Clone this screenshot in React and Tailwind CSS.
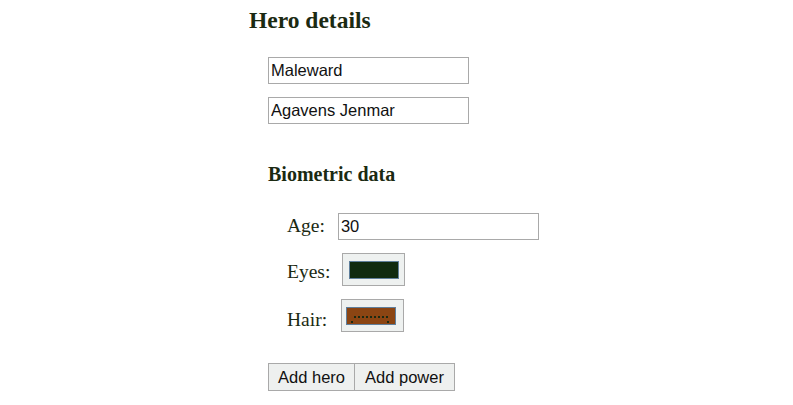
import React from 'react';

const serif = "font-['Liberation_Serif',_'Times_New_Roman',_serif]";
const sans = "font-['Liberation_Sans',_Arial,_sans-serif]";

const ColorSwatch = ({ color, focused, offset }) => (
  <div className={`w-[63px] h-[33px] border border-[#a9a9a9] bg-[#eef1f0] flex items-center ${offset}`}>
    <div className="relative w-[50px] h-[18px] border border-[#5f7f9c]" style={{ backgroundColor: color }}>
      {focused && (
        <>
          <span className="absolute left-[7px] top-[8px] w-[34px] border-t-2 border-dotted border-[#1b2a12]"></span>
          <span className="absolute left-[4px] bottom-[1px] w-[2px] h-[2px] bg-[#1b2a12]"></span>
          <span className="absolute right-[6px] bottom-[1px] w-[2px] h-[2px] bg-[#1b2a12]"></span>
        </>
      )}
    </div>
  </div>
);

export default function App() {
  return (
    <div className={`w-[793px] h-[405px] bg-white pl-[249px] text-[#1b2a12] ${serif}`}>
      {/* Heading */}
      <h2 className="pt-[6px] text-[23.5px] leading-[28px] font-bold">Hero details</h2>

      <div className="pl-[19px]">
        <div className="mt-[23px] flex flex-col gap-[13px]">
          <input
            readOnly
            value="Maleward"
            className={`w-[201px] h-[27px] border border-[#a9a9a9] px-[2px] text-[16.5px] text-[#111] outline-none ${sans}`}
          />
          <input
            readOnly
            value="Agavens Jenmar"
            className={`w-[201px] h-[27px] border border-[#a9a9a9] px-[2px] text-[16.5px] text-[#111] outline-none ${sans}`}
          />
        </div>

        <h3 className="mt-[38px] text-[20px] leading-[24px] font-bold">Biometric data</h3>

        {/* Biometric rows */}
        <div className="mt-[27px] pl-[19px] flex flex-col gap-[13px] text-[19.5px] leading-[24px]">
          <div className="flex items-baseline gap-[13px]">
            <span>Age:</span>
            <input
              readOnly
              value="30"
              className={`w-[201px] h-[27px] border border-[#a9a9a9] px-[2px] text-[16.5px] text-[#111] outline-none ${sans}`}
            />
          </div>
          <div className="flex items-center gap-[12px]">
            <span className="pt-[5px]">Eyes:</span>
            <ColorSwatch color="#0f2a10" offset="pl-[6px]" />
          </div>
          <div className="flex items-center gap-[14px]">
            <span className="pt-[8px]">Hair:</span>
            <ColorSwatch color="#8b4513" offset="pl-[4px]" focused />
          </div>
        </div>

        {/* Actions */}
        <div className={`mt-[31px] flex text-[16.5px] text-[#111] ${sans}`}>
          <button className="w-[87px] h-[28px] border border-[#a9a9a9] bg-[#eef0ef]">Add hero</button>
          <button className="w-[100px] h-[28px] border border-l-0 border-[#a9a9a9] bg-[#eef0ef]">Add power</button>
        </div>
      </div>
    </div>
  );
}
